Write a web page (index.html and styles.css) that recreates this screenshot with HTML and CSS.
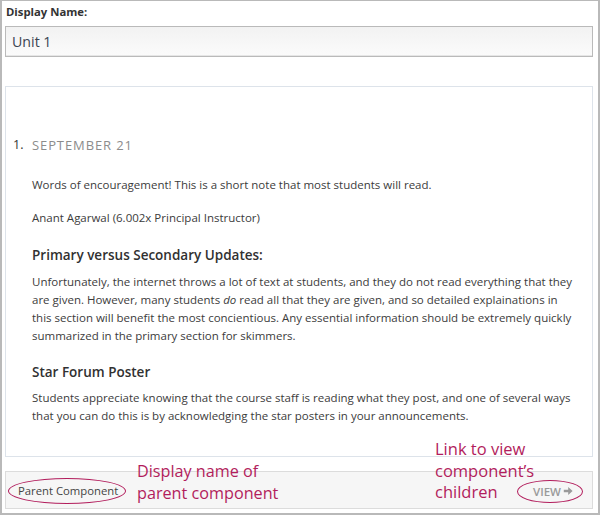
FILE: index.html
```html
<!DOCTYPE html>
<html>
<head>
<meta charset="utf-8">
<link rel="stylesheet" href="styles.css">
</head>
<body>
<div class="frame">
  <label class="field-label">Display Name:</label>
  <div class="name-input">Unit 1</div>

  <div class="panel">
    <ol class="updates">
      <li>
        <h2 class="date">September 21</h2>
        <p class="p-first">Words of encouragement! This is a short note that most students will read.</p>
        <p class="p-sig">Anant Agarwal (6.002x Principal Instructor)</p>
        <h3 class="h-primary">Primary versus Secondary Updates:</h3>
        <p class="p-long">Unfortunately, the internet throws a lot of text at students, and they do not read everything that they are given. However, many students <em>do</em> read all that they are given, and so detailed explainations in this section will benefit the most concientious. Any essential information should be extremely quickly summarized in the primary section for skimmers.</p>
        <h3 class="h-star">Star Forum Poster</h3>
        <p class="p-star">Students appreciate knowing that the course staff is reading what they post, and one of several ways that you can do this is by acknowledging the star posters in your announcements.</p>
      </li>
    </ol>
  </div>

  <div class="bar">
    <span class="parent-name circled">Parent Component</span>
    <span class="view-link circled">VIEW <svg class="arrow" width="10" height="10" viewBox="0 0 10 10"><path d="M0.8 3.7h4.4V1L9.6 5 5.2 9V6.3H0.8z" fill="#9a9a9a"/></svg></span>
  </div>

  <div class="note note-parent">Display name of<br>parent component</div>
  <div class="note note-view">Link to view<br>component’s<br>children</div>
</div>
</body>
</html>
```

FILE: styles.css
```css
* { box-sizing: border-box; }
html, body { margin: 0; padding: 0; background: #fff; }
body { font-family: "Open Sans", "Noto Sans", sans-serif; color: #3c3c3c; }

.frame {
  position: relative;
  width: 600px;
  height: 515px;
  border: 1px solid #b9b9b9;
  border-left-width: 2px;
  border-right-width: 2px;
  border-bottom-width: 2px;
  padding: 3px 5px 0 3px;
  display: flex;
  flex-direction: column;
}

.field-label {
  display: block;
  font-weight: 700;
  font-size: 11.3px;
  line-height: 16px;
  color: #333;
  margin: 0 0 0 1px;
}

.name-input {
  margin-top: 6px;
  height: 31px;
  border: 1px solid #bababa;
  background: linear-gradient(#f2f2f2, #fbfbfb);
  box-shadow: inset 0 -1px 0 #e6e6e6;
  font-size: 14.2px;
  line-height: 29px;
  padding-left: 6px;
  color: #3b4452;
}

.panel {
  margin-top: 29px;
  height: 371px;
  border: 1px solid #dde3ea;
  padding: 49px 0 0 0;
}

.updates {
  margin: 0;
  padding: 0 17px 0 7px;
  list-style: none;
  font-size: 11.5px;
  line-height: 18px;
  color: #333;
}
.updates li {
  display: grid;
  grid-template-columns: 19px 1fr;
}
.updates li::before {
  content: "1.";
  grid-column: 1;
  grid-row: 1;
  font-size: 12.5px;
  line-height: 18px;
  color: #333;
}
.updates li > * { grid-column: 2; }

.date {
  margin: 0;
  font-size: 13px;
  font-weight: 400;
  line-height: 18px;
  letter-spacing: 0.9px;
  text-transform: uppercase;
  color: #8c8c8c;
}

.updates p { margin: 0; color: #3c3c3c; }
.p-first { margin-top: 22px !important; }
.p-sig { margin-top: 15px !important; }
.updates h3 {
  margin: 0;
  font-size: 13.5px;
  font-weight: 600;
  line-height: 20px;
  color: #313131;
}
.h-primary { margin-top: 18px !important; }
.p-long { margin-top: 8px !important; }
.h-star { margin-top: 17px !important; }
.p-star { margin-top: 7px !important; }

.bar {
  margin-top: 14px;
  height: 38px;
  border: 1px solid #dcdcdc;
  background: #f6f6f6;
  display: flex;
  align-items: center;
  justify-content: space-between;
  padding: 0 19px 0 12px;
}

.circled { position: relative; }
.circled::after {
  content: "";
  position: absolute;
  border: 1.3px solid #b21d5c;
  border-radius: 50%;
}
.parent-name {
  font-size: 11.3px;
  line-height: 15px;
  color: #444;
}
.parent-name::after { left: -10px; right: -8px; top: -5px; bottom: -6px; }

.view-link {
  font-size: 11.5px;
  font-weight: 600;
  line-height: 15px;
  color: #9a9a9a;
  display: flex;
  align-items: center;
  gap: 2px;
  margin-top: 2px;
}
.view-link::after { left: -16px; right: -10px; top: -4px; bottom: -4px; }
.arrow { display: block; }

.note {
  position: absolute;
  color: #b21d5c;
  font-size: 16.2px;
  line-height: 22px;
}
.note-parent { left: 135px; top: 459px; }
.note-view { left: 433px; top: 437px; font-size: 16.5px; line-height: 21.5px; }
```
